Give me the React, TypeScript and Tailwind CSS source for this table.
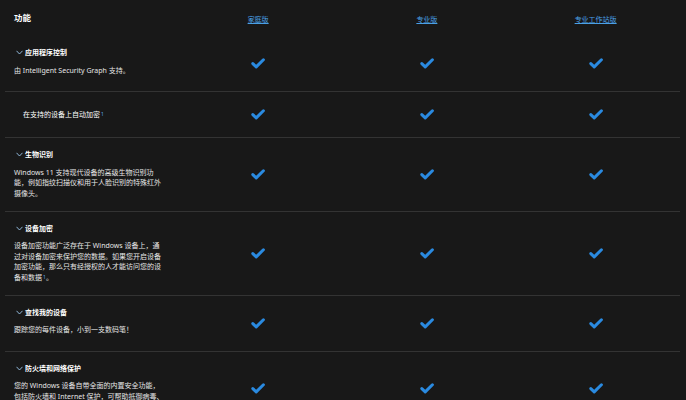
type Feature = {
  title?: string;
  lines: React.ReactNode[];
};

const features: Feature[] = [
  { title: '应用程序控制', lines: ['由 Intelligent Security Graph 支持。'] },
  {
    lines: [
      <>
        在支持的设备上自动加密<Sup />
      </>,
    ],
  },
  {
    title: '生物识别',
    lines: [
      'Windows 11 支持现代设备的高级生物识别功',
      '能，例如指纹扫描仪和用于人脸识别的特殊红外',
      '摄像头。',
    ],
  },
  {
    title: '设备加密',
    lines: [
      '设备加密功能广泛存在于 Windows 设备上，通',
      '过对设备加密来保护您的数据。如果您开启设备',
      '加密功能，那么只有经授权的人才能访问您的设',
      <>
        备和数据<Sup />。
      </>,
    ],
  },
  { title: '查找我的设备', lines: ['跟踪您的每件设备，小到一支数码笔！'] },
  {
    title: '防火墙和网络保护',
    lines: [
      '您的 Windows 设备自带全面的内置安全功能，',
      '包括防火墙和 Internet 保护，可帮助抵御病毒、',
      '恶意软件和勒索软件。',
    ],
  },
];

const editions = ['家庭版', '专业版', '专业工作站版'];

function Sup() {
  return <sup className="relative -top-[1px] ml-[1px] text-[5px] text-[#5aa7e8]">1</sup>;
}

function Chevron() {
  return (
    <svg width="7" height="5" viewBox="0 0 7 5" className="ml-[2px] mr-[2px] shrink-0">
      <polyline points="0.5,0.8 3.5,4 6.5,0.8" fill="none" stroke="#9cc6ec" strokeWidth="0.9" />
    </svg>
  );
}

function Check() {
  return (
    <svg width="14" height="11" viewBox="0 0 14 11">
      <path
        d="M1.8 5.6 L5.2 8.9 L12.4 1.8"
        fill="none"
        stroke="#2a8ae0"
        strokeWidth="3"
        strokeLinecap="round"
        strokeLinejoin="round"
      />
    </svg>
  );
}

export default function App() {
  return (
    <div
      className="h-[400px] w-[686px] overflow-hidden bg-[#181818] text-[#e6e6e6]"
      style={{ fontFamily: '"Noto Sans", "Noto Sans CJK SC", sans-serif' }}
    >
      <div className="ml-[5px] w-[675px]">
        {/* 表头 */}
        <div className="grid h-[36px] grid-cols-4">
          <div className="pl-[9px] pt-[12px] text-[8.5px] font-bold leading-[12px] text-white">功能</div>
          {editions.map(e => (
            <div key={e} className="pt-[15px] text-center text-[7px] leading-[10px]">
              <span className="text-[#4aa0e6] underline underline-offset-[1px]">{e}</span>
            </div>
          ))}
        </div>

        {features.map((f, i) => (
          <div key={i} className="grid grid-cols-4 border-b border-[#333333]">
            {f.title ? (
              <div className="min-h-[55px] pb-[11px] pl-[9px] pr-[4px] pt-[11px]">
                <div className="flex h-[11px] items-center overflow-visible text-[7px] font-bold leading-[11px] text-white">
                  <Chevron />
                  {f.title}
                </div>
                <div className="mt-[7.5px] text-[7px] leading-[10.7px]">
                  {f.lines.map((l, j) => (
                    <div key={j} className="h-[10.7px] whitespace-nowrap">
                      {l}
                    </div>
                  ))}
                </div>
              </div>
            ) : (
              <div className="flex h-[45px] items-center pl-[18px] text-[7px] leading-[11px] text-white">
                {f.lines[0]}
              </div>
            )}
            {editions.map(e => (
              <div key={e} className="flex items-center justify-center">
                <Check />
              </div>
            ))}
          </div>
        ))}
      </div>
    </div>
  );
}
